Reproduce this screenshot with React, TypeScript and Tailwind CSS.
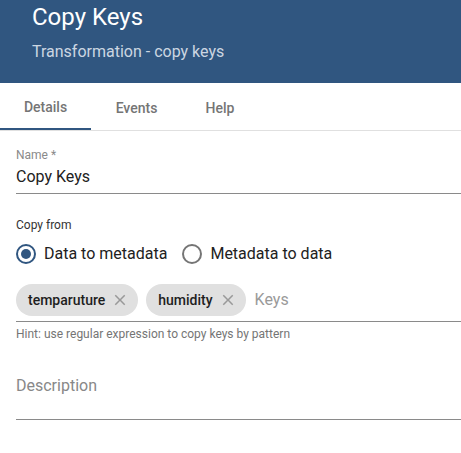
import React from "react";

function XIcon() {
  return (
    <svg width="18" height="18" viewBox="0 0 24 24" className="shrink-0">
      <path d="M19 6.41 17.59 5 12 10.59 6.41 5 5 6.41 10.59 12 5 17.59 6.41 19 12 13.41 17.59 19 19 17.59 13.41 12z" fill="#999999" />
    </svg>
  );
}

function Chip({ label }: { label: string }) {
  return (
    <div className="flex items-center h-8 rounded-full bg-[#e0e0e0] pl-3 pr-[9px] gap-[6px]">
      <span className="text-[14px] font-medium text-[#1e1e1e]">{label}</span>
      <XIcon />
    </div>
  );
}

function Radio({ checked, label }: { checked: boolean; label: string }) {
  return (
    <div className="flex items-center gap-2">
      <div
        className={
          "w-5 h-5 rounded-full border-2 flex items-center justify-center " +
          (checked ? "border-[#305680]" : "border-[#757575]")
        }
      >
        {checked && <div className="w-[10px] h-[10px] rounded-full bg-[#305680]" />}
      </div>
      <span className="text-[16px] text-[#212121]">{label}</span>
    </div>
  );
}

export default function App() {
  return (
    <div className="w-[461px] h-[453px] bg-white overflow-hidden" style={{ fontFamily: "Roboto, 'Liberation Sans', sans-serif" }}>
      <div className="h-[83px] bg-[#305680] pl-8 pt-[1px]">
        <div className="text-[24px] leading-[32px] text-white">Copy Keys</div>
        <div className="text-[16px] leading-[24px] mt-[7px] text-[#ccd6e2]">Transformation - copy keys</div>
      </div>
      <div className="flex h-[48px] border-b border-[#e0e0e0]">
        <div className="w-[91px] flex items-center justify-center pt-[4px] text-[14px] font-medium text-[#757575] border-b-2 border-[#305680]">Details</div>
        <div className="w-[91px] flex items-center justify-center pt-[3px] text-[14px] font-medium text-[#757575]">Events</div>
        <div className="w-[76px] flex items-center justify-center pt-[3px] text-[14px] font-medium text-[#757575]">Help</div>
      </div>
      <div className="pl-4 pt-[16px]">
        <div className="border-b border-[#8a8a8a] pb-[4px]">
          <div className="text-[12px] leading-[16px] text-[#8a8a8a]">Name *</div>
          <div className="text-[16px] leading-[24px] text-[#212121] mt-[2px]">Copy Keys</div>
        </div>
        <div className="text-[12px] leading-[16px] text-[#333] mt-[23px]">Copy from</div>
        <div className="flex items-center gap-[15px] mt-[9px] h-[24px]">
          <Radio checked label="Data to metadata" />
          <Radio checked={false} label="Metadata to data" />
        </div>
        <div className="mt-[18px] border-b border-[#8a8a8a] pb-[5px] flex items-center gap-2">
          <Chip label="temparuture" />
          <Chip label="humidity" />
          <span className="text-[16px] text-[#9a9a9a] ml-[1px]">Keys</span>
        </div>
        <div className="text-[12px] leading-[16px] text-[#757575] mt-[4px]">Hint: use regular expression to copy keys by pattern</div>
        <div className="mt-[25px] border-b border-[#8a8a8a] h-[53px]">
          <div className="text-[16px] leading-[24px] text-[#888888] pt-[7px]">Description</div>
        </div>
      </div>
    </div>
  );
}
